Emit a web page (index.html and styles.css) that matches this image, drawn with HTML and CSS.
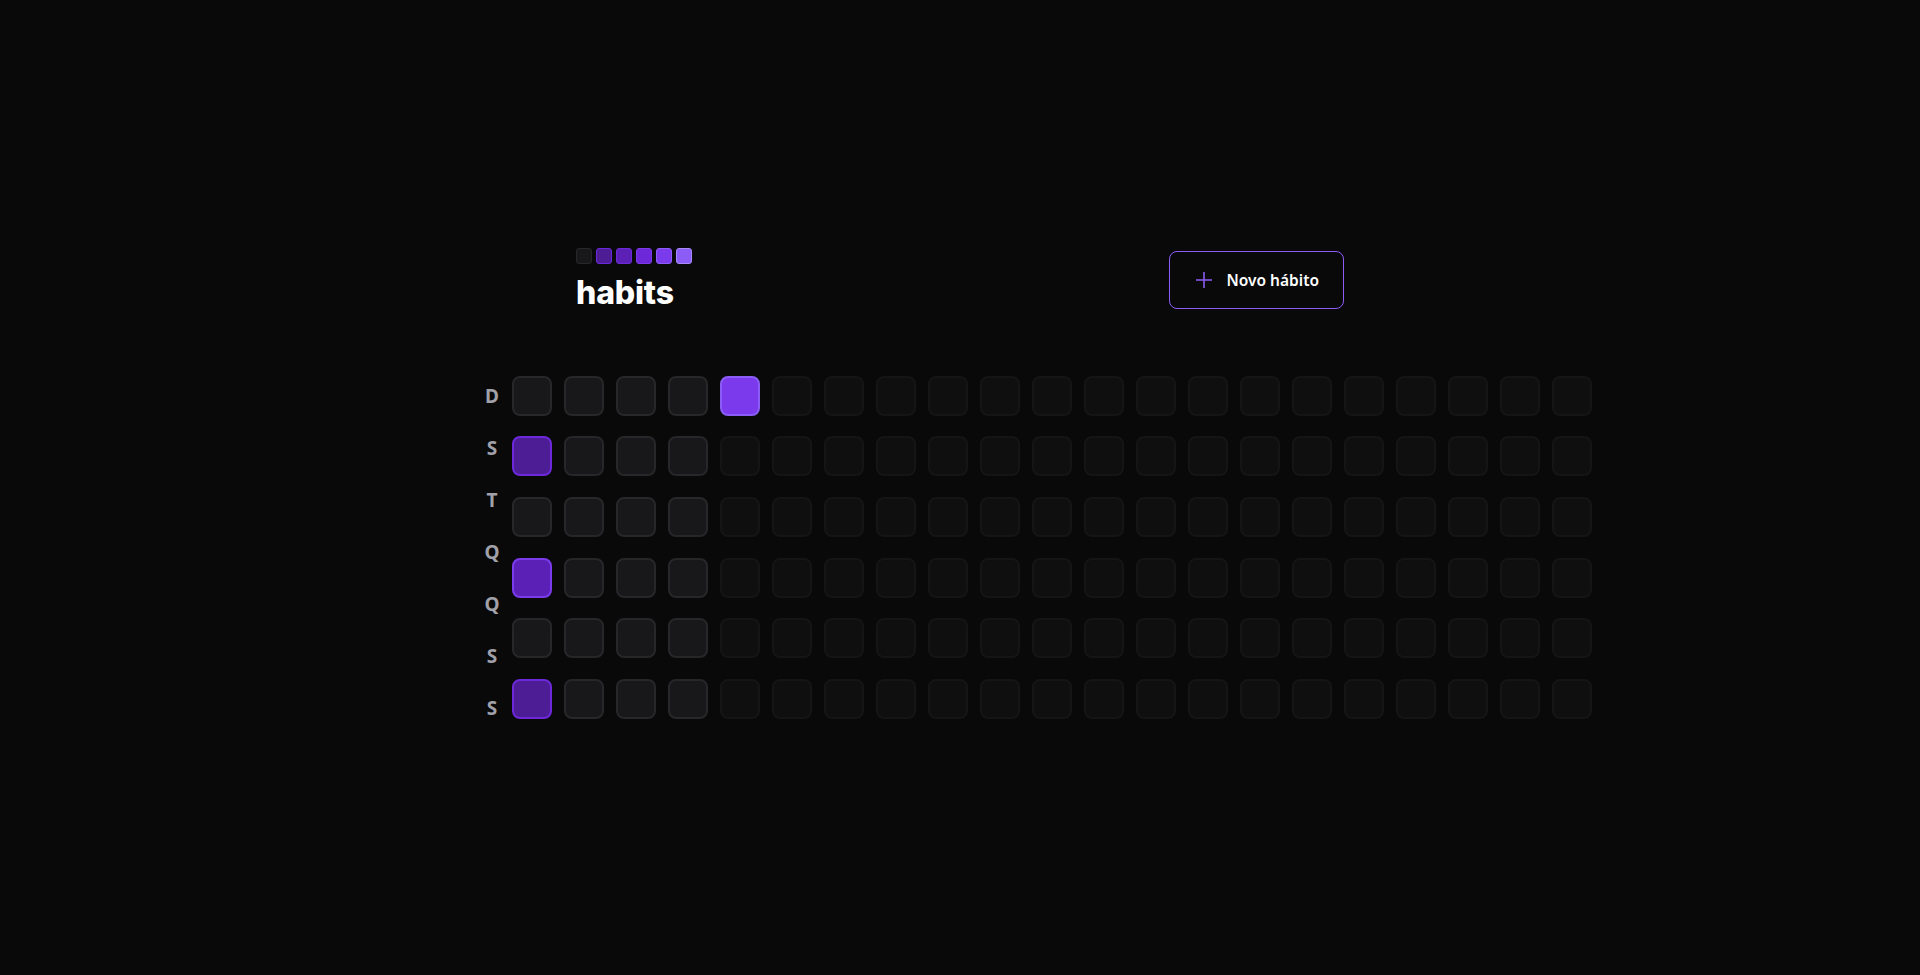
FILE: index.html
```html
<!DOCTYPE html>
<html lang="pt-BR">
<head>
<meta charset="utf-8">
<title>habits</title>
<link rel="stylesheet" href="styles.css">
</head>
<body>
<div class="screen">
  <div class="container">
    <header class="header">
      <div class="logo">
        <div class="logo-squares">
          <span class="ls ls-0"></span>
          <span class="ls ls-1"></span>
          <span class="ls ls-2"></span>
          <span class="ls ls-3"></span>
          <span class="ls ls-4"></span>
          <span class="ls ls-5"></span>
        </div>
        <div class="logo-text">habits</div>
      </div>
      <button class="new-btn" type="button">
        <svg class="plus" width="20" height="20" viewBox="0 0 20 20" fill="none" stroke="#8b5cf6" stroke-width="1.6" stroke-linecap="butt"><path d="M2 10h16M10 2v16"/></svg>
        <span>Novo hábito</span>
      </button>
    </header>
    <div class="table">
      <div class="weekdays">
        <div class="wd">D</div>
        <div class="wd">S</div>
        <div class="wd">T</div>
        <div class="wd">Q</div>
        <div class="wd">Q</div>
        <div class="wd">S</div>
        <div class="wd">S</div>
      </div>
      <div class="days" id="days"></div>
    </div>
  </div>
</div>
<script src="app.js"></script>
</body>
</html>
```
FILE: styles.css
```css
* { box-sizing: border-box; }
html, body { margin: 0; padding: 0; }
body {
  background: #09090a;
  color: #fff;
  font-family: "Noto Sans", "Open Sans", sans-serif;
}
.screen {
  width: 100vw;
  height: 100vh;
  display: flex;
  align-items: center;
  justify-content: center;
}
.container {
  width: 100%;
  max-width: 1024px;
  padding: 0 24px;
  display: flex;
  flex-direction: column;
  gap: 64px;
}
.header {
  width: 100%;
  max-width: 768px;
  margin: 0 auto;
  display: flex;
  align-items: center;
  justify-content: space-between;
}
.logo { display: flex; flex-direction: column; }
.logo-squares { display: flex; gap: 4px; height: 16px; margin-bottom: 9px; }
.ls { width: 16px; height: 16px; border-radius: 3px; border: 1px solid; }
.ls-0 { background: #18181b; border-color: #27272a; }
.ls-1 { background: #4c1d95; border-color: #6d28d9; }
.ls-2 { background: #5b21b6; border-color: #6d28d9; }
.ls-3 { background: #6d28d9; border-color: #7c3aed; }
.ls-4 { background: #7c3aed; border-color: #8b5cf6; }
.ls-5 { background: #8b5cf6; border-color: #a78bfa; }
.logo-text {
  font-family: Inter, sans-serif;
  font-weight: 800;
  font-size: 32px;
  line-height: 39px;
  letter-spacing: -0.2px;
  color: #fff;
}
.new-btn {
  display: flex;
  align-items: center;
  gap: 12px;
  background: transparent;
  border: 1px solid #8b5cf6;
  border-radius: 8px;
  padding: 16px 24px;
  color: #fff;
  font-family: "Noto Sans", sans-serif;
  font-weight: 600;
  font-size: 15.5px;
  line-height: 24px;
  cursor: pointer;
}
.plus { display: block; }
.table { display: flex; }
.weekdays {
  display: grid;
  grid-template-rows: repeat(7, 40px);
  gap: 12px;
}
.wd {
  width: 40px;
  height: 40px;
  display: flex;
  align-items: center;
  justify-content: center;
  color: #a1a1aa;
  font-weight: 700;
  font-size: 19px;
}
.days {
  display: grid;
  grid-template-rows: repeat(6, 1fr);
  grid-auto-flow: column;
  grid-auto-columns: 40px;
  gap: 12px;
}
.day {
  width: 40px;
  height: 40px;
  border-radius: 8px;
  border: 2px solid #27272a;
  background: #18181b;
}
.day.dim { background: #0f0f10; border-color: #151516; }
.day.p1 { background: #4c1d95; border-color: #6d28d9; }
.day.p2 { background: #5b21b6; border-color: #7c3aed; }
.day.p4 { background: #7c3aed; border-color: #8b5cf6; }
```
FILE: app.js
```js
(function () {
  var days = document.getElementById('days');
  var special = { '1,5': 'p4', '2,1': 'p1', '4,1': 'p2', '6,1': 'p1' };
  for (var c = 1; c <= 21; c++) {
    for (var r = 1; r <= 6; r++) {
      var d = document.createElement('div');
      d.className = 'day';
      var key = r + ',' + c;
      if (special[key]) d.className += ' ' + special[key];
      else if (c >= 5) d.className += ' dim';
      days.appendChild(d);
    }
  }
})();
```
